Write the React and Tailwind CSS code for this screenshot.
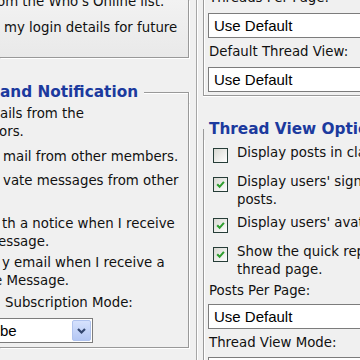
export default function App() {
  const L = "leading-[18px] whitespace-nowrap";
  const sel = "h-[25px] bg-white border border-[#7c7c7c] flex items-center font-['Liberation_Sans',Arial,sans-serif] text-[15px] text-black";

  const Box = ({ checked }) => (
    <div className="mt-[4px] mb-[5px] w-[15px] h-[15px] shrink-0 border border-[#263d38] bg-gradient-to-br from-[#d8d8d2] to-white flex items-center justify-center">
      {checked && (
        <svg width="9" height="9" viewBox="0 0 9 9">
          <path d="M1.2 4.2 L3.6 6.8 L7.9 1.8" stroke="#2e9e2e" strokeWidth="2" fill="none" />
        </svg>
      )}
    </div>
  );

  return (
    <div className="w-[360px] h-[360px] overflow-hidden bg-[#f0f0f0] flex font-['DejaVu_Sans',Verdana,sans-serif] text-[13.33px] text-[#111]">
      {/* Left column */}
      <div className="w-[190px] shrink-0 flex flex-col">
        <div className="h-[58px] w-[189px] border-r border-b border-[#999] shadow-[1px_1px_0_#fff] flex flex-col bg-gradient-to-b from-[#f2f2f2] to-[#e9e9e9]">
          <div className={`mt-[-7px] ml-[-3px] ${L}`}>om the Who's Online list.</div>
          <div className={`mt-[8px] ml-[4px] ${L}`}>my login details for future</div>
        </div>

        <div className="mt-[23px] h-[22px] w-[189px] flex items-center">
          <span className="font-bold text-[15.3px] leading-[22px] text-[#1c3a9e] whitespace-nowrap">and Notification</span>
          <div className="ml-[6px] flex-1 self-end h-[11px] border-t border-r border-[#999] shadow-[inset_0_1px_0_#fff,1px_0_0_#fff]" />
        </div>

        <div className="w-[189px] h-[245px] border-r border-b border-[#999] shadow-[1px_1px_0_#fff] flex flex-col">
          <div className={`mt-[2px] ${L}`}>ails from the</div>
          <div className={`ml-[-1px] ${L}`}>ors.</div>
          <div className={`mt-[7px] ml-[3px] ${L}`}>mail from other members.</div>
          <div className={`mt-[6px] ml-[3px] ${L}`}>vate messages from other</div>
          <div className="h-[18px]" />
          <div className={`mt-[7px] ml-[2px] ${L}`}>th a notice when I receive</div>
          <div className={`ml-[-2px] ${L}`}>essage.</div>
          <div className={`mt-[3px] ml-[2px] ${L}`}>y email when I receive a</div>
          <div className={`ml-[-6px] ${L}`}>e Message.</div>
          <div className={`mt-[4px] ml-[5px] ${L}`}>Subscription Mode:</div>
          <div className={`mt-[6px] ml-[-10px] w-[103px] shrink-0 ${sel}`}>
            <span className="flex-1 pl-[9px] pt-[1px]">be</span>
            <div className="w-[19px] h-[21px] mr-[1px] rounded-[2px] bg-gradient-to-b from-[#d6e2fd] to-[#b4c7f4] border border-[#b0c3ee] flex items-center justify-center">
              <svg width="11" height="8" viewBox="0 0 11 8">
                <path d="M2 2 L5.5 5.5 L9 2" stroke="#33466e" strokeWidth="2.2" fill="none" />
              </svg>
            </div>
          </div>
        </div>
      </div>

      {/* Right column */}
      <div className="flex-1 ml-[6px] border-l border-[#a6a6a6] shadow-[inset_1px_0_0_#fff] flex flex-col pl-[6px] min-w-0">
        <div className="h-[96px] shrink-0 border-l border-b border-[#999] shadow-[inset_1px_0_0_#fff,0_1px_0_#fff] flex flex-col">
          <div className={`mt-[-11px] ml-[5px] ${L}`}>Threads Per Page:</div>
          <div className={`mt-[6px] ml-[4px] w-[220px] shrink-0 ${sel}`}>
            <span className="pl-[5px] pt-[1px]">Use Default</span>
          </div>
          <div className={`mt-[5px] ml-[5px] ${L}`}>Default Thread View:</div>
          <div className={`mt-[6px] ml-[4px] w-[220px] shrink-0 ${sel}`}>
            <span className="pl-[5px] pt-[1px]">Use Default</span>
          </div>
        </div>

        <div className="mt-[22px] h-[22px] shrink-0 flex items-center">
          <div className="w-[8px] self-end h-[11px] border-t border-l border-[#999] shadow-[inset_1px_1px_0_#fff]" />
          <span className="ml-[5px] font-bold text-[15.3px] leading-[22px] text-[#1c3a9e] whitespace-nowrap">Thread View Options</span>
        </div>

        <div className="flex-1 border-l border-[#999] shadow-[inset_1px_0_0_#fff] flex flex-col">
          <div className="mt-[4px] ml-[9px] flex items-start">
            <Box checked={false} />
            <div className="ml-[9px]">
              <div className={L}>Display posts in classic mode</div>
            </div>
          </div>
          <div className="mt-[5px] ml-[9px] flex items-start">
            <Box checked />
            <div className="ml-[9px]">
              <div className={L}>Display users' signatures in their</div>
              <div className={L}>posts.</div>
            </div>
          </div>
          <div className="mt-[5px] ml-[9px] flex items-start">
            <Box checked />
            <div className="ml-[9px]">
              <div className={L}>Display users' avatars in their posts.</div>
            </div>
          </div>
          <div className="mt-[5px] ml-[9px] flex items-start">
            <Box checked />
            <div className="ml-[9px]">
              <div className={L}>Show the quick reply box on the</div>
              <div className={L}>thread page.</div>
            </div>
          </div>
          <div className={`mt-[3px] ml-[5px] ${L}`}>Posts Per Page:</div>
          <div className={`mt-[4px] ml-[4px] w-[220px] shrink-0 ${sel}`}>
            <span className="pl-[5px] pt-[1px]">Use Default</span>
          </div>
          <div className={`mt-[5px] ml-[5px] ${L}`}>Thread View Mode:</div>
          <div className={`mt-[5px] ml-[4px] w-[220px] shrink-0 ${sel}`}>
            <span className="pl-[5px] pt-[1px]">Linear</span>
          </div>
        </div>
      </div>
    </div>
  );
}
